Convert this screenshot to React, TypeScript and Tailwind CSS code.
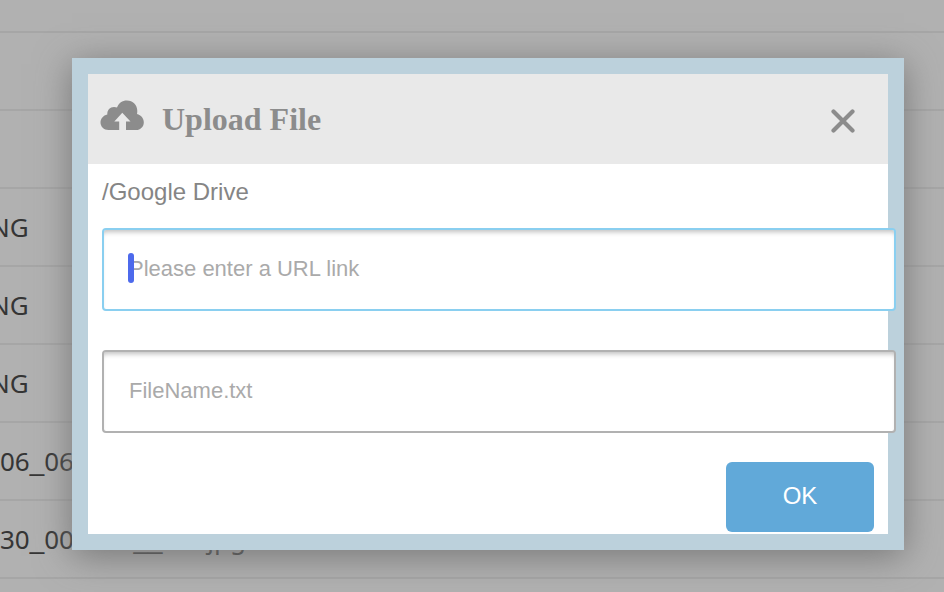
import React, { useState } from 'react';

interface FileRow {
    id: number;
    name: string;
}

const files: FileRow[] = [
    { id: 1, name: '' },
    { id: 2, name: '' },
    { id: 3, name: 'NG' },
    { id: 4, name: 'NG' },
    { id: 5, name: 'NG' },
    { id: 6, name: '06_06' },
    { id: 7, name: '30_000000__cut.jpg' },
];

const CloudUploadIcon = () => (
    <svg width="44" height="32" viewBox="0 0 44 32" fill="#8c8c8c" aria-hidden="true">
        <path d="M8.500 30C3.800 30 0.500 26.500 0.500 22.500C0.500 18.500 3.200 15.500 7.300 14.500C7 10 10 7 14 7C15.200 7 16.300 7.300 17 7.600C18.800 3 22.300 0.500 26.800 0.500C33 0.500 37.300 5 37.300 11C37.300 12.200 37.200 13.200 37 14C41 15.200 43.800 18.400 43.800 22.200C43.800 26.800 40.500 30 36 30H26V21.500H30.500L22.300 12.800L14.300 21.500H19.200V30Z" />
    </svg>
);

const CloseIcon = () => (
    <svg width="24" height="24" viewBox="0 0 24 24" stroke="#8c8c8c" strokeWidth="4.200" strokeLinecap="round" fill="none" aria-hidden="true">
        <path d="M2.500 2.500L21.500 21.500M21.500 2.500L2.500 21.500" />
    </svg>
);

// underscores are as wide as the digits
const FileName: React.FC<{ name: string }> = ({ name }) => (
    <span className="flex items-baseline">
        {name.split(/(_+)/).map((part, i) => (
            <span key={i} className={part.startsWith('_') ? "font-['Liberation_Sans',sans-serif] leading-none" : ''}>{part}</span>
        ))}
    </span>
);

const inputClass = 'block w-full h-[83px] px-[25px] pb-[2px] text-[22px] text-gray-700 placeholder:text-[#aaaaaa] placeholder:opacity-100 bg-white border-2 rounded-[4px] outline-none shadow-[inset_0_5px_5px_-3px_rgba(0,0,0,0.25)]';

const UploadDialog: React.FC = () => {
    const [url, setUrl] = useState('');
    const [fileName, setFileName] = useState('');

    return (
        <div role="dialog" aria-labelledby="upload-title" className="border-[16px] border-[#bcd1dc] bg-white shadow-[0_6px_34px_#777777]">
            <div className="h-[90px] pl-3 pr-[33px] flex items-center justify-between bg-[#e9e9e9]">
                <div className="flex items-center gap-[18px]">
                    <span className="pb-[6px]"><CloudUploadIcon /></span>
                    <h2 id="upload-title" className="font-['Liberation_Serif',serif] text-[32px] font-bold text-[#8c8c8c]">Upload File</h2>
                </div>
                <button type="button" aria-label="Close" className="pt-1"><CloseIcon /></button>
            </div>
            <div className="pl-[14px] pt-3 pb-[2px]">
                <p className="text-2xl text-[#858585]">/Google Drive</p>
                {/* fields run over the right frame */}
                <div className="mt-5 -mr-2 flex flex-col gap-[39px]">
                    <div className="relative">
                        <input type="text" aria-label="URL link" placeholder="Please enter a URL link" className={`${inputClass} border-[#8acff0] caret-transparent`} value={url} onChange={(e) => setUrl(e.target.value)} />
                        {!url && <span className="absolute left-[26px] top-[25px] w-[6px] h-[30px] rounded-[3px] bg-[#4d6aec]" />}
                    </div>
                    <input type="text" aria-label="File name" placeholder="FileName.txt" className={`${inputClass} border-[#b1b1b1]`} value={fileName} onChange={(e) => setFileName(e.target.value)} />
                </div>
                <div className="mt-[29px] pr-[14px] flex justify-end">
                    <button type="button" className="w-[148px] h-[70px] pb-[2px] rounded-md bg-[#61a9d9] text-white text-2xl">OK</button>
                </div>
            </div>
        </div>
    );
};

export default function App() {
    return (
        <div className="relative min-h-screen overflow-hidden bg-[#b1b1b1] font-['Liberation_Sans',Arial,sans-serif]">
            <ul className="pt-[31px] font-['Noto_Sans',sans-serif] text-[26px] text-[#353535]">
                {files.map(file => (
                    <li key={file.id} className="h-[78px] flex items-center border-t-2 border-[#a6a6a6]">
                        <div className={file.name === 'NG' ? '-ml-[10px]' : ''}>
                            <FileName name={file.name} />
                        </div>
                    </li>
                ))}
                <li className="border-t-2 border-[#a6a6a6]" />
            </ul>
            <div className="absolute inset-0 pt-[58px] pl-[72px] pr-10">
                <UploadDialog />
            </div>
        </div>
    );
}
